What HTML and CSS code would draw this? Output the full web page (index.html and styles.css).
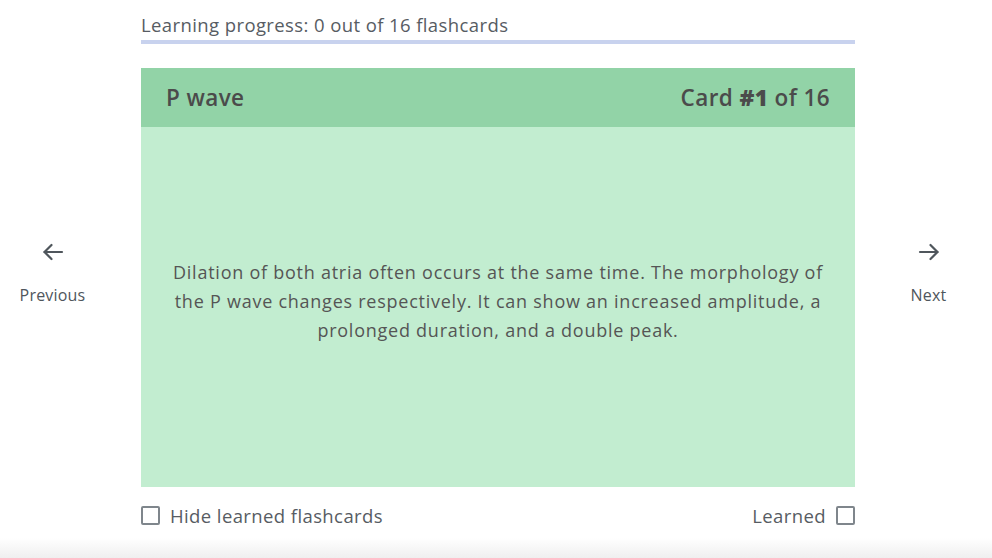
FILE: index.html
```html
<!DOCTYPE html>
<html lang="en">
<head>
<meta charset="utf-8">
<title>Flashcards</title>
<link rel="stylesheet" href="styles.css">
</head>
<body>
<div class="page">
  <div class="progress">
    <div class="progress-label">Learning progress: 0 out of 16 flashcards</div>
    <div class="progress-track"><div class="progress-fill" style="width:0%"></div></div>
  </div>

  <button class="nav nav-prev" type="button">
    <svg width="24" height="24" viewBox="0 0 24 24" fill="none" stroke="#4f565c" stroke-width="2.2" stroke-linecap="round" stroke-linejoin="round"><path d="M21 12H3.5"/><path d="M10.5 5l-7 7 7 7"/></svg>
    <span>Previous</span>
  </button>

  <div class="card">
    <div class="card-head">
      <span class="card-title">P wave</span>
      <span class="card-count">Card <b>#1</b> of 16</span>
    </div>
    <div class="card-body">
      <p>Dilation of both atria often occurs at the same time. The morphology of the P wave changes respectively. It can show an increased amplitude, a prolonged duration, and a double peak.</p>
    </div>
  </div>

  <button class="nav nav-next" type="button">
    <svg width="24" height="24" viewBox="0 0 24 24" fill="none" stroke="#4f565c" stroke-width="2.2" stroke-linecap="round" stroke-linejoin="round"><path d="M3 12h17.5"/><path d="M13.5 5l7 7-7 7"/></svg>
    <span>Next</span>
  </button>

  <div class="footer">
    <label class="check"><span class="box"></span>Hide learned flashcards</label>
    <label class="check">Learned<span class="box"></span></label>
  </div>
</div>
<div class="fade"></div>
</body>
</html>
```

FILE: styles.css
```css
html, body {
  margin: 0;
  padding: 0;
  background: #ffffff;
  height: 558px;
  overflow: hidden;
}
body {
  font-family: "Open Sans", "Lato", sans-serif;
  color: #555555;
  position: relative;
}
.page {
  display: grid;
  grid-template-columns: 141px 714px 1fr;
  grid-template-rows: auto auto auto;
  padding-top: 13px;
}
.progress {
  grid-column: 2;
  grid-row: 1;
}
.progress-label {
  font-size: 18.5px;
  line-height: 24px;
  color: #575c63;
  letter-spacing: 0.4px;
}
.progress-track {
  margin-top: 3px;
  height: 4px;
  background: #c8d2ee;
}
.progress-fill {
  height: 100%;
  background: #7a8fd6;
}
.nav {
  grid-row: 2;
  align-self: center;
  display: flex;
  flex-direction: column;
  align-items: center;
  gap: 20px;
  background: none;
  border: 0;
  padding: 0;
  font-family: inherit;
  font-size: 16px;
  letter-spacing: 0.2px;
  color: #4f565c;
  width: 105px;
  margin-top: 14px;
}
.nav-prev { grid-column: 1; justify-self: start; }
.nav-next { grid-column: 3; justify-self: start; margin-left: 21px; }
.card {
  grid-column: 2;
  grid-row: 2;
  margin-top: 24px;
}
.card-head {
  background: #92d3a7;
  height: 59px;
  display: flex;
  justify-content: space-between;
  align-items: center;
  padding: 0 25px;
  font-size: 22.5px;
  font-weight: 600;
  letter-spacing: 0.4px;
  color: #4b4b4b;
}
.card-count b { font-weight: 800; }
.card-body {
  background: #c2edd0;
  height: 360px;
  display: flex;
  align-items: center;
  justify-content: center;
  padding: 0 30px;
  box-sizing: border-box;
}
.card-body p {
  margin: 0 0 12px;
  text-align: center;
  font-size: 18px;
  line-height: 29px;
  letter-spacing: 0.75px;
  color: #555555;
}
.footer {
  grid-column: 2;
  grid-row: 3;
  display: flex;
  justify-content: space-between;
  align-items: center;
  margin-top: 16px;
  font-size: 18.5px;
  letter-spacing: 0.4px;
  color: #575c63;
}
.check {
  display: flex;
  align-items: center;
  gap: 10px;
}
.box {
  width: 15px;
  height: 15px;
  border: 2px solid #7f868c;
  border-radius: 2px;
  display: inline-block;
}
.fade {
  position: absolute;
  left: 0;
  right: 0;
  bottom: 0;
  height: 20px;
  background: linear-gradient(#ffffff, #efefef);
}
```
